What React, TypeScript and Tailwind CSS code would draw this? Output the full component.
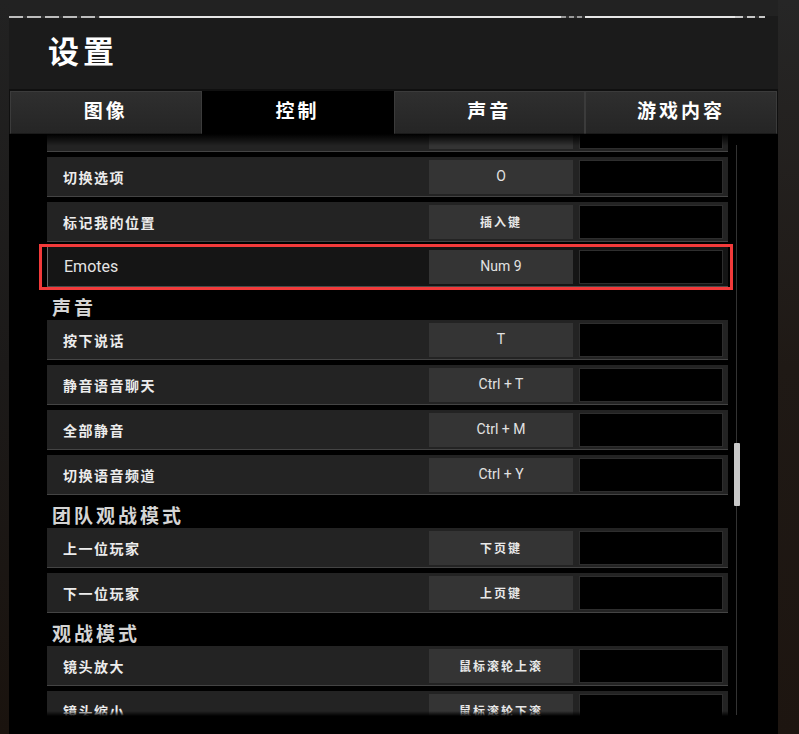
import React from "react";

type Row = { label: string; key: string; highlight?: boolean };
type Section = { title?: string; rows: Row[] };

const CJK = "font-['Noto_Sans_CJK_SC',sans-serif]";
const LATIN = "font-['Roboto','Noto_Sans_CJK_SC',sans-serif]";

const SECTIONS: Section[] = [
    {
        rows: [
            { label: "", key: "" },
            { label: "切换选项", key: "O" },
            { label: "标记我的位置", key: "插入键" },
            { label: "Emotes", key: "Num 9", highlight: true },
        ],
    },
    {
        title: "声音",
        rows: [
            { label: "按下说话", key: "T" },
            { label: "静音语音聊天", key: "Ctrl + T" },
            { label: "全部静音", key: "Ctrl + M" },
            { label: "切换语音频道", key: "Ctrl + Y" },
        ],
    },
    {
        title: "团队观战模式",
        rows: [
            { label: "上一位玩家", key: "下页键" },
            { label: "下一位玩家", key: "上页键" },
        ],
    },
    {
        title: "观战模式",
        rows: [
            { label: "镜头放大", key: "鼠标滚轮上滚" },
            { label: "镜头缩小", key: "鼠标滚轮下滚" },
        ],
    },
];

const TABS = ["图像", "控制", "声音", "游戏内容"];

const isLatin = (s: string) => /^[A-Za-z0-9 +]+$/.test(s);

function KeyRow({ row }: { row: Row }) {
    const base = row.highlight
        ? "bg-[#151515] border-l border-[#6a6a6a] border-b border-b-[#4a4a4a]"
        : "bg-[#232323] border-b border-[#444444]";
    return (
        <div className={`relative flex items-center h-[40px] mb-[5px] pr-[5px] ${base}`}>
            {row.highlight && (
                <div className="absolute -left-[9px] -right-[5px] -top-[3px] -bottom-[4px] border-[3px] border-[#f23a3a] pointer-events-none" />
            )}
            <div className="flex-1 pl-[16px]">
                {isLatin(row.label) ? (
                    <span className={`${LATIN} text-[16px] text-[#e4e4e4]`}>{row.label}</span>
                ) : (
                    <span className={`${CJK} text-[14px] font-bold tracking-[1.5px] text-[#ececec]`}>{row.label}</span>
                )}
            </div>
            <div className="w-[144px] h-[34px] bg-[#343434] flex items-center justify-center">
                {isLatin(row.key) ? (
                    <span className={`${LATIN} text-[14px] text-[#e2e2e2]`}>{row.key}</span>
                ) : (
                    <span className={`${CJK} text-[12px] font-bold tracking-[2px] text-[#e8e8e8]`}>{row.key}</span>
                )}
            </div>
            <div className="w-[144px] h-[34px] ml-[6px] bg-black border border-[#2e2e2e]" />
        </div>
    );
}

export default function App() {
    return (
        <div className="w-[799px] h-[734px] flex overflow-hidden bg-[#222222]">
            {/* left edge */}
            <div className="w-[9px] h-full bg-gradient-to-b from-[#222222] via-[#1c1a19] to-[#1a130e]" />

            {/* settings panel */}
            <div className="w-[769px] h-full flex flex-col">
                <div className="h-[16px] bg-[#222222]" />
                <div className="h-[2px] flex">
                    <div className="w-[91px] bg-[repeating-linear-gradient(90deg,#bdbdbd_0px,#bdbdbd_14px,#333_14px,#333_18px)]" />
                    <div className="w-[461px] bg-[#e6e6e6]" />
                    <div className="w-[24px] bg-[repeating-linear-gradient(90deg,#9a9a9a_0px,#9a9a9a_5px,#333_5px,#333_8px)]" />
                    <div className="w-[150px] bg-[#e6e6e6]" />
                    <div className="w-[30px] bg-[repeating-linear-gradient(90deg,#c8c8c8_0px,#c8c8c8_8px,#333_8px,#333_12px)]" />
                    <div className="flex-1 bg-[#1b1b1b]" />
                </div>

                {/* header */}
                <div className="h-[71px] bg-[#1b1b1b] flex items-center pl-[39px] pb-[8px]">
                    <h1 className={`${CJK} text-[31px] font-bold tracking-[4px] text-white leading-none`}>设置</h1>
                </div>

                {/* tabs */}
                <div className="h-[45px] bg-[#101010] pt-[2px] grid grid-cols-4 px-[1px]">
                    {TABS.map((t, i) =>
                        i === 1 ? (
                            <div key={t} className="bg-black flex items-center justify-center pb-[4px]">
                                <span className={`${CJK} text-[19px] font-bold tracking-[3px] text-white`}>{t}</span>
                            </div>
                        ) : (
                            <div
                                key={t}
                                className="bg-gradient-to-b from-[#2f2f2f] to-[#252525] border border-[#3b3b3b] border-b-[#1a1a1a] flex items-center justify-center pb-[4px]"
                            >
                                <span className={`${CJK} text-[19px] font-bold tracking-[3px] text-white`}>{t}</span>
                            </div>
                        )
                    )}
                </div>

                {/* content */}
                <div className="flex-1 bg-black flex">
                    <div className="relative w-[724px] h-[582px] pl-[38px] pr-[5px] overflow-hidden">
                        <div className="-mt-[22px]">
                            {SECTIONS.map((s, si) => (
                                <div key={si}>
                                    {s.title && (
                                        <div className="h-[28px] flex items-center pl-[5px]">
                                            <span className={`${CJK} text-[19px] font-bold tracking-[3px] text-[#d4d4d4] leading-none`}>
                                                {s.title}
                                            </span>
                                        </div>
                                    )}
                                    {s.rows.map((r, ri) => (
                                        <KeyRow key={ri} row={r} />
                                    ))}
                                </div>
                            ))}
                        </div>
                        <div className="absolute top-0 left-0 right-0 h-[12px] bg-gradient-to-b from-black to-transparent" />
                        <div className="absolute bottom-0 left-0 right-0 h-[5px] bg-gradient-to-t from-black to-transparent" />
                    </div>

                    {/* scrollbar */}
                    <div className="w-[7px] h-[570px] mt-[11px] flex flex-col items-center">
                        <div className="w-px h-[298px] bg-[#333333]" />
                        <div className="w-[6px] h-[63px] bg-[#c9c9c9] rounded-[1px]" />
                        <div className="w-px flex-1 bg-[#333333]" />
                    </div>
                </div>
            </div>

            {/* right edge */}
            <div className="flex-1 h-full bg-gradient-to-b from-[#262626] via-[#1f1915] to-[#1d1510]" />
        </div>
    );
}
